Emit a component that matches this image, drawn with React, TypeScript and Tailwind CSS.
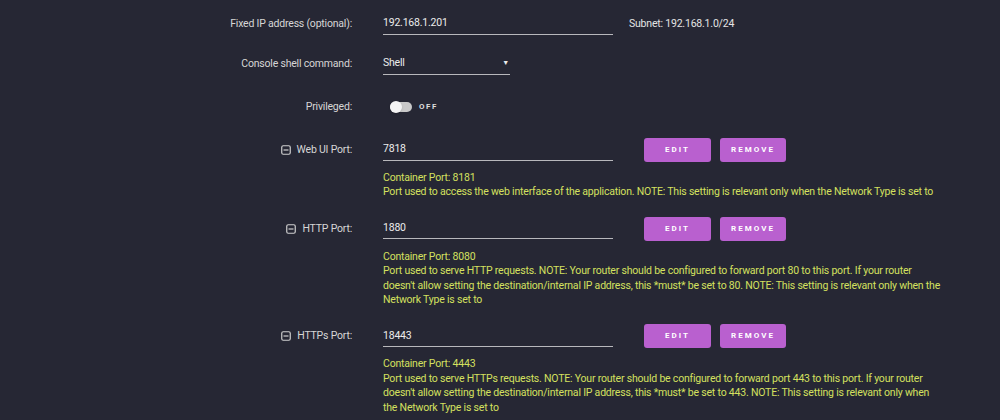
import { ReactNode } from "react";

type PortField = {
  label: string;
  value: string;
  container: string;
  note: string[];
};

const PORTS: PortField[] = [
  {
    label: "Web UI Port:",
    value: "7818",
    container: "8181",
    note: [
      "Port used to access the web interface of the application. NOTE: This setting is relevant only when the Network Type is set to",
    ],
  },
  {
    label: "HTTP Port:",
    value: "1880",
    container: "8080",
    note: [
      "Port used to serve HTTP requests. NOTE: Your router should be configured to forward port 80 to this port. If your router",
      "doesn't allow setting the destination/internal IP address, this *must* be set to 80. NOTE: This setting is relevant only when the",
      "Network Type is set to",
    ],
  },
  {
    label: "HTTPs Port:",
    value: "18443",
    container: "4443",
    note: [
      "Port used to serve HTTPs requests. NOTE: Your router should be configured to forward port 443 to this port. If your router",
      "doesn't allow setting the destination/internal IP address, this *must* be set to 443. NOTE: This setting is relevant only when",
      "the Network Type is set to",
    ],
  },
];

function MinusBox() {
  return (
    <svg width="10" height="10" viewBox="0 0 10 10" className="shrink-0">
      <rect x="0.75" y="0.75" width="8.5" height="8.5" rx="1.5" fill="none" stroke="#d0d0d0" strokeWidth="1.2" />
      <line x1="2.5" y1="5" x2="7.5" y2="5" stroke="#d0d0d0" strokeWidth="1.2" />
    </svg>
  );
}

function Row({ label, icon, children }: { label: string; icon?: boolean; children: ReactNode }) {
  return (
    <div className="flex h-[24px] items-center">
      <div className="flex w-[352px] items-center justify-end gap-[6px] text-[#d6d6d6]">
        {icon && <MinusBox />}
        <span>{label}</span>
      </div>
      <div className="ml-[31px] flex items-center">{children}</div>
    </div>
  );
}

function TextInput({ value, width }: { value: string; width: string }) {
  return (
    <div className={`flex h-[21px] items-center border-b border-[#b8b8bc] text-[#ececec] ${width}`}>
      {value}
    </div>
  );
}

function ActionButton({ text, width }: { text: string; width: string }) {
  return (
    <button
      className={`flex h-[24px] items-center justify-center rounded-[3px] bg-[#b960cf] text-[8px] font-bold tracking-[2px] text-white ${width}`}
    >
      {text}
    </button>
  );
}

export default function App() {
  return (
    <div
      className="h-[420px] w-[1000px] overflow-hidden bg-[#262734] pt-[12px] text-[10.5px] leading-[14.4px] tracking-[-0.2px]"
      style={{ fontFamily: "Roboto, 'Liberation Sans', sans-serif" }}
    >
      <Row label="Fixed IP address (optional):">
        <TextInput value="192.168.1.201" width="w-[230px]" />
        <span className="ml-[16px] text-[#e4e4e4]">Subnet: 192.168.1.0/24</span>
      </Row>

      <div className="mt-[16px]">
        <Row label="Console shell command:">
          <div className="flex h-[21px] w-[127px] items-center justify-between border-b border-[#b8b8bc] pr-[1px] text-[#ececec]">
            <span>Shell</span>
            <span className="text-[7px]">▼</span>
          </div>
        </Row>
      </div>

      <div className="mt-[19px]">
        <Row label="Privileged:">
          <div className="ml-[7px] flex items-center">
            <div className="relative h-[10px] w-[22px] rounded-full bg-[#c9c9c9]">
              <div className="absolute left-0 top-[-1px] h-[12px] w-[12px] rounded-full bg-[#f4f4f4] shadow" />
            </div>
            <span className="ml-[7px] text-[8px] font-semibold tracking-[1.5px] text-[#e0e0e0]">OFF</span>
          </div>
        </Row>
      </div>

      {PORTS.map((p, i) => (
        <div key={p.label} className={i === 0 ? "mt-[19px]" : "mt-[17px]"}>
          <Row label={p.label} icon>
            <TextInput value={p.value} width="w-[230px]" />
            <div className="ml-[31px] flex gap-[9px]">
              <ActionButton text="EDIT" width="w-[67px]" />
              <ActionButton text="REMOVE" width="w-[66px]" />
            </div>
          </Row>
          <div className="ml-[383px] mt-[9px] w-[600px] whitespace-nowrap text-[#d4e05f]">
            <div>Container Port: {p.container}</div>
            {p.note.map((line) => (
              <div key={line}>{line}</div>
            ))}
          </div>
        </div>
      ))}
    </div>
  );
}
